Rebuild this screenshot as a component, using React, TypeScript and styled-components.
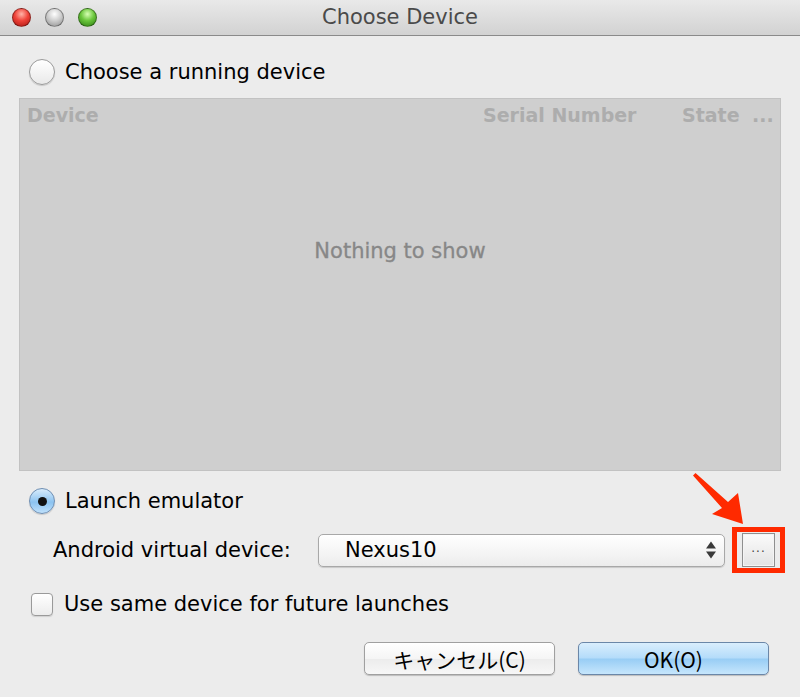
import React, { FC } from 'react'
import styled, { createGlobalStyle, css } from 'styled-components'

const GlobalStyle = createGlobalStyle`
	html, body {
		margin: 0;
		padding: 0;
		background: #ececec;
	}
	* {
		box-sizing: border-box;
	}
`

const Window = styled.div`
	position: relative;
	width: 800px;
	height: 697px;
	background: #ececec;
	font-family: 'DejaVu Sans', 'Noto Sans CJK JP', sans-serif;
	font-size: 21px;
	color: #000;
	overflow: hidden;
	display: flex;
	flex-direction: column;
`

const TitleBar = styled.div`
	height: 36px;
	flex-shrink: 0;
	display: grid;
	grid-template-columns: 1fr auto 1fr;
	align-items: center;
	background: linear-gradient(#e9e9e9, #d2d2d2);
	border-bottom: 1px solid #8a8a8a;
`

const Lights = styled.div`
	display: flex;
	gap: 14px;
	padding-left: 12px;
`

const Light = styled.span<{ $color: 'red' | 'gray' | 'green' }>`
	width: 19px;
	height: 19px;
	border-radius: 50%;
	border: 1px solid rgba(0, 0, 0, 0.35);
	${({ $color }) =>
		$color === 'red'
			? css`
					background: radial-gradient(circle at 50% 30%, #ffb4a8 0%, #f0443a 45%, #a9140f 100%);
			  `
			: $color === 'gray'
			? css`
					background: radial-gradient(circle at 50% 30%, #ffffff 0%, #cfcfcf 45%, #8e8e8e 100%);
			  `
			: css`
					background: radial-gradient(circle at 50% 30%, #d7ffb4 0%, #6bc73c 45%, #2d7c12 100%);
			  `}
`

const Title = styled.div`
	font-size: 21px;
	color: #4a4a4a;
	padding-bottom: 1px;
`

const Content = styled.div`
	flex: 1;
	display: flex;
	flex-direction: column;
	padding: 0 19px;
`

const OptionRow = styled.div<{ $top: number; $indent: number; $gap?: number }>`
	display: flex;
	align-items: center;
	gap: ${({ $gap }) => $gap ?? 10}px;
	height: 26px;
	margin-top: ${({ $top }) => $top}px;
	padding-left: ${({ $indent }) => $indent}px;
`

const Radio = styled.span<{ $checked?: boolean }>`
	position: relative;
	width: 26px;
	height: 26px;
	border-radius: 50%;
	border: 1px solid #9a9a9a;
	box-shadow: 0 1px 1px rgba(0, 0, 0, 0.15);
	background: ${({ $checked }) =>
		$checked ? 'linear-gradient(#d8ecfc, #8cc3f0 55%, #bfe0fb)' : 'linear-gradient(#ffffff, #e9e9e9)'};
	border-color: ${({ $checked }) => ($checked ? '#6f8fb3' : '#9a9a9a')};

	&::after {
		content: '';
		display: ${({ $checked }) => ($checked ? 'block' : 'none')};
		position: absolute;
		left: 50%;
		top: 50%;
		width: 9px;
		height: 9px;
		margin: -4.5px 0 0 -4.5px;
		border-radius: 50%;
		background: #111;
	}
`

const Checkbox = styled.span`
	width: 22px;
	height: 23px;
	border-radius: 4px;
	border: 1px solid #9a9a9a;
	background: linear-gradient(#ffffff, #ececec);
	box-shadow: 0 1px 1px rgba(0, 0, 0, 0.12);
`

const Table = styled.div`
	margin-top: 13px;
	height: 373px;
	background: #cfcfcf;
	border: 1px solid #c2c2c2;
	display: flex;
	flex-direction: column;
`

const HeaderRow = styled.div`
	display: grid;
	grid-template-columns: 1fr 199px 70px 28px;
	height: 32px;
	align-items: center;
	font-weight: bold;
	font-size: 19px;
	color: #adadad;
`

const HeaderCell = styled.span<{ $pad?: number }>`
	padding-left: ${({ $pad }) => $pad ?? 0}px;
	white-space: nowrap;
`

const Empty = styled.div`
	flex: 1;
	display: flex;
	align-items: center;
	justify-content: center;
	color: #878787;
	font-size: 21px;
	padding-bottom: 100px;
	-webkit-text-stroke: 0.3px #878787;
`

const AvdRow = styled.div`
	display: flex;
	align-items: center;
	height: 46px;
	margin-top: 13px;
	padding-left: 34px;

	& > * {
		flex-shrink: 0;
	}
`

const Label = styled.span`
	width: 265px;
`

const Combo = styled.div`
	position: relative;
	width: 407px;
	height: 33px;
	border: 1px solid #a8a8a8;
	border-radius: 5px;
	background: linear-gradient(#ffffff, #f4f4f4 60%, #ececec);
	box-shadow: 0 1px 1px rgba(0, 0, 0, 0.15);
	display: flex;
	align-items: center;
	padding-left: 26px;
`

const Stepper = styled.span`
	position: absolute;
	right: 8px;
	top: 50%;
	transform: translateY(-50%);
	display: flex;
	flex-direction: column;
	gap: 3px;
`

const Tri = styled.span<{ $down?: boolean }>`
	width: 0;
	height: 0;
	border-left: 5px solid transparent;
	border-right: 5px solid transparent;
	${({ $down }) => ($down ? 'border-top: 7px solid #3a3a3a;' : 'border-bottom: 7px solid #3a3a3a;')}
`

const Highlight = styled.div`
	margin-left: 7px;
	padding: 1px 5px;
	height: 46px;
	border: 5px solid #ff2a00;
	display: flex;
	align-items: center;
`

const MoreButton = styled.div`
	width: 33px;
	height: 34px;
	border: 1px solid #8f8f8f;
	background: linear-gradient(#fbfbfb, #e3e3e3);
	box-shadow: inset 0 0 0 1px #f4f4f4;
	display: flex;
	align-items: center;
	justify-content: center;
	font-size: 12px;
	color: #444;
	letter-spacing: 1px;
	padding-bottom: 4px;
`

const Buttons = styled.div`
	display: flex;
	justify-content: flex-end;
	gap: 23px;
	margin-top: 25px;
	padding-right: 12px;
`

const Button = styled.div<{ $primary?: boolean }>`
	width: 191px;
	height: 33px;
	border-radius: 5px;
	display: flex;
	align-items: center;
	justify-content: center;
	font-family: 'Noto Sans CJK JP', 'DejaVu Sans', sans-serif;
	font-size: 21px;
	box-shadow: 0 1px 1px rgba(0, 0, 0, 0.2);
	${({ $primary }) =>
		$primary
			? css`
					border: 1px solid #6b87a8;
					background: linear-gradient(#d9eefd, #b4dcfa 48%, #98cdf5 52%, #c6e6fc);
			  `
			: css`
					border: 1px solid #a0a0a0;
					background: linear-gradient(#ffffff, #f5f5f5 50%, #ececec 52%, #f7f7f7);
			  `}
`

const Pointer = styled.svg`
	position: absolute;
	left: 688px;
	top: 468px;
	pointer-events: none;
`

const App: FC = () => (
	<Window>
		<GlobalStyle />
		<TitleBar>
			<Lights>
				<Light $color="red" />
				<Light $color="gray" />
				<Light $color="green" />
			</Lights>
			<Title>Choose Device</Title>
			<span />
		</TitleBar>
		<Content>
			<OptionRow $top={23} $indent={10}>
				<Radio />
				<span>Choose a running device</span>
			</OptionRow>
			<Table>
				<HeaderRow>
					<HeaderCell $pad={7}>Device</HeaderCell>
					<HeaderCell>Serial Number</HeaderCell>
					<HeaderCell>State</HeaderCell>
					<HeaderCell>...</HeaderCell>
				</HeaderRow>
				<Empty>Nothing to show</Empty>
			</Table>
			<OptionRow $top={17} $indent={10}>
				<Radio $checked />
				<span>Launch emulator</span>
			</OptionRow>
			<AvdRow>
				<Label>Android virtual device:</Label>
				<Combo>
					Nexus10
					<Stepper>
						<Tri />
						<Tri $down />
					</Stepper>
				</Combo>
				<Highlight>
					<MoreButton>...</MoreButton>
				</Highlight>
			</AvdRow>
			<OptionRow $top={18} $indent={12} $gap={11}>
				<Checkbox />
				<span>Use same device for future launches</span>
			</OptionRow>
			<Buttons>
				<Button>キャンセル(C)</Button>
				<Button $primary>OK(O)</Button>
			</Buttons>
		</Content>
		<Pointer width="60" height="60" viewBox="0 0 60 60">
			<path d="M5 7.5 L7.5 5 L40 34 L50 25 L55 56 L24 46 L34 40 Z" fill="#ff2a00" />
		</Pointer>
	</Window>
)

export default App
